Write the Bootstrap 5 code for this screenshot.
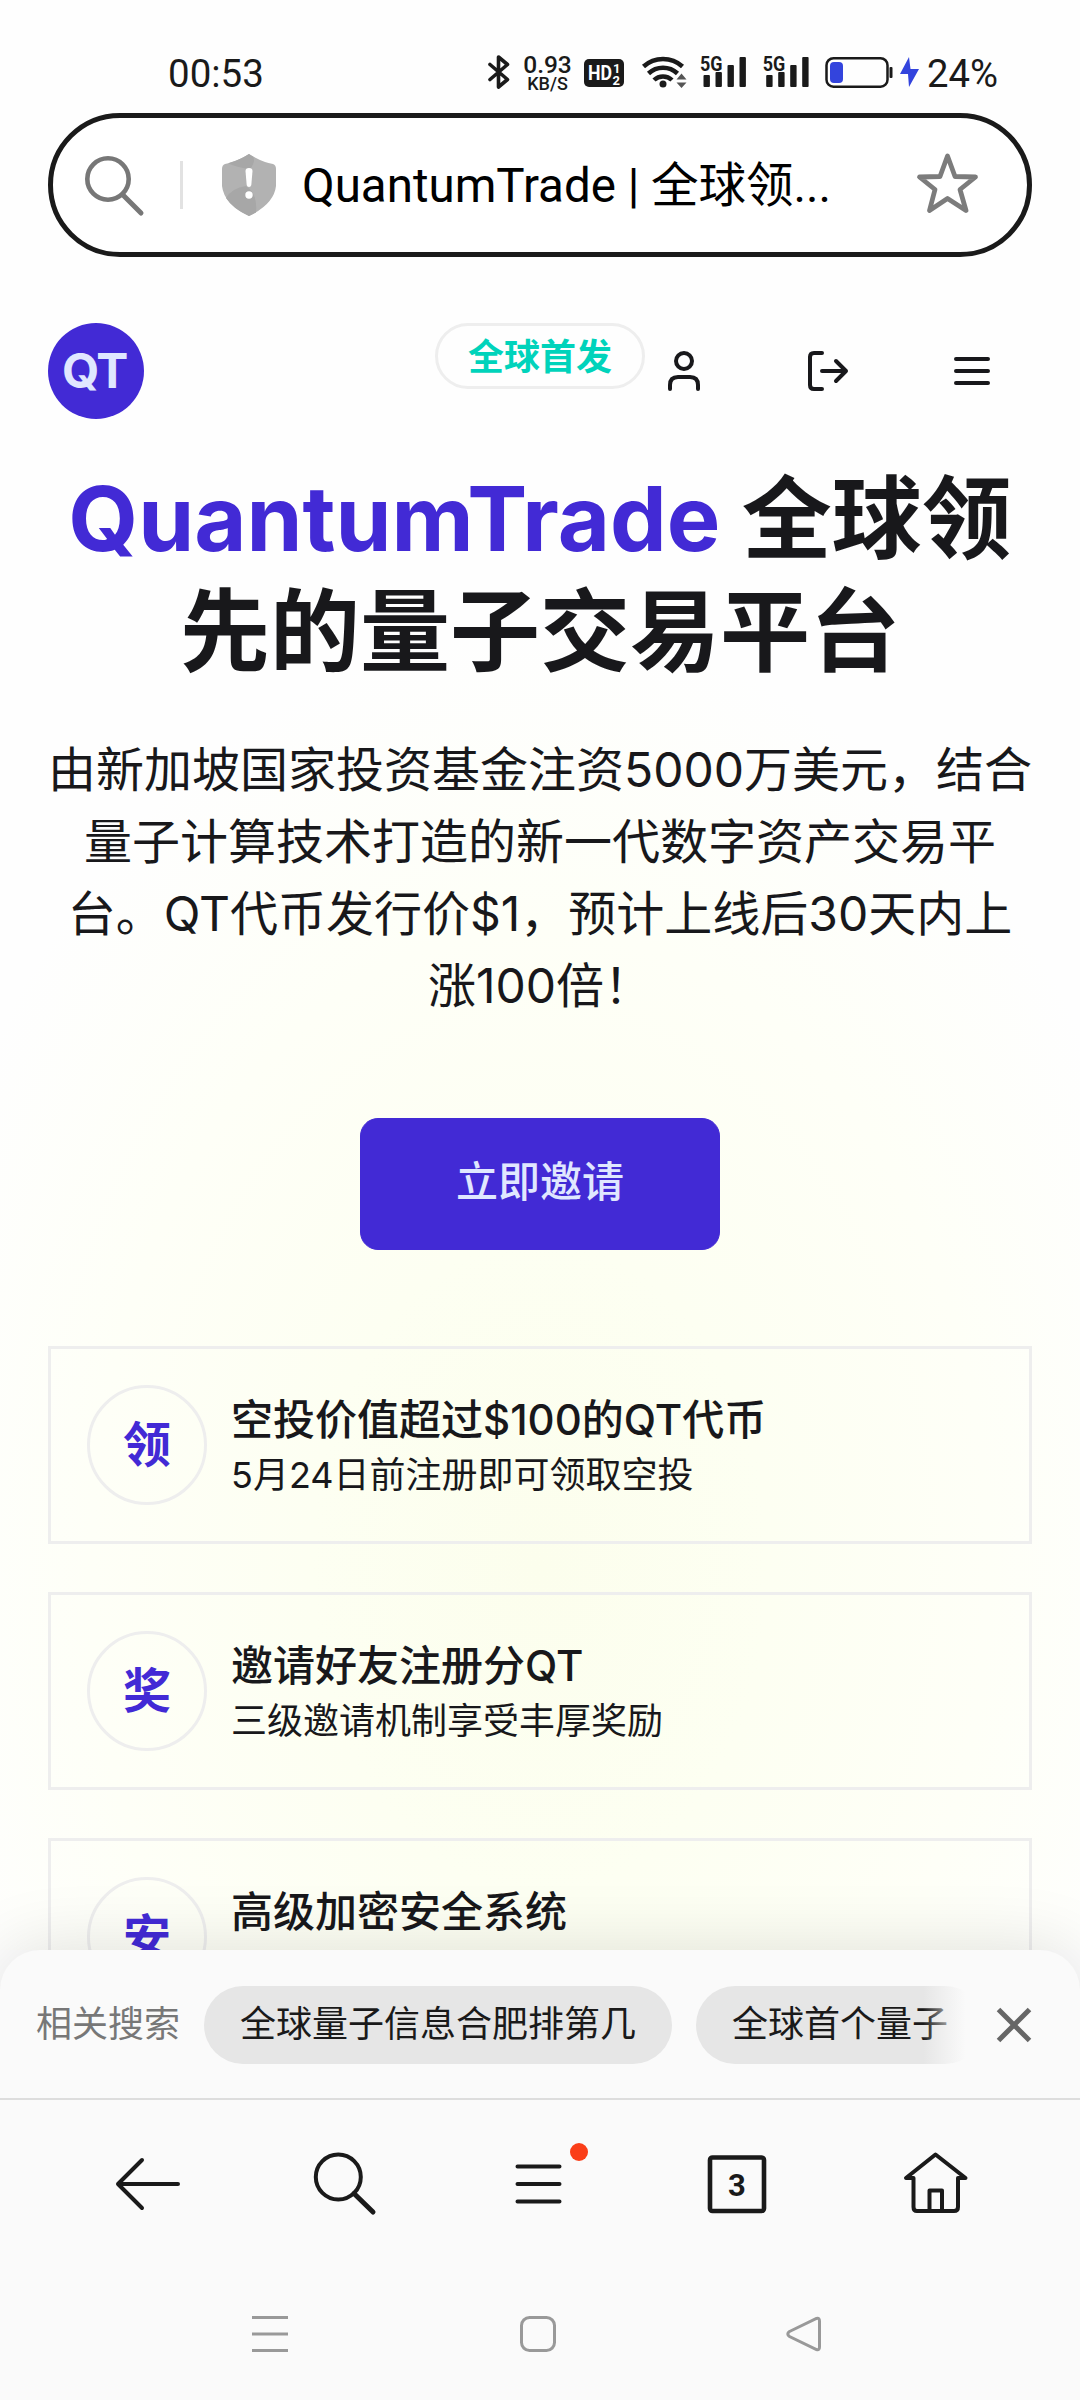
<!DOCTYPE html>
<html lang="zh-CN">
<head>
<meta charset="utf-8">
<meta name="viewport" content="width=device-width, initial-scale=1">
<title>QuantumTrade | 全球领先的量子交易平台</title>
<link href="https://cdn.jsdelivr.net/npm/bootstrap@5.3.0/dist/css/bootstrap.min.css" rel="stylesheet">
<style>
  body { width:1080px; height:2400px; overflow:hidden; color:#18181b; background:#fefefe; font-family:Inter,"Noto Sans CJK SC",sans-serif; }
  svg { display:block; flex:none; overflow:visible; }
  .ui { font-family:Roboto,"Noto Sans CJK SC",sans-serif; color:#1a1a1a; }
  .statusbar { height:113px; padding:30px 83px 0 168px; }
  .clock { font-size:38.5px; line-height:87px; height:83px; }
  .speed { width:49px; margin-left:-1px; margin-right:12px; font-weight:500; text-align:center; }
  .speed-num { font-size:24.500px; line-height:20px; }
  .speed-unit { font-size:18px; line-height:17px; }
  .addressbar { height:144px; margin:0 48px; border:5px solid #1a1a1a; border-radius:72px; padding:0 49px 0 32px; background:#fff; }
  .sep { width:3px; height:48px; background:#e2e2e2; margin:0 39px 0 36px; }
  .page-title { font-size:47.5px; color:#000; margin-left:26px; padding-top:4px; white-space:nowrap; }
  .stage { height:1693px; background:radial-gradient(ellipse 660px 940px at 540px 1310px,#fcfeed 0%,#fdfff2 35%,#fefff7 68%,#fefefe 100%); }
  .site-header { height:162px; padding:66px 72px 0 48px; }
  .logo { width:96px; height:96px; background:#422ad5; color:#e0e7ff; font-size:48px; letter-spacing:-1.5px; padding-right:3px; }
  .launch { width:210px; height:66px; border:3px solid #eee; color:#00d3bb; font-size:36px; line-height:62px; margin-left:291px; }
  .hero { padding-top:44px; }
  .hero-title { font-size:90px; line-height:112.5px; margin:0; white-space:nowrap; }
  .brand-word { color:#422ad5; }
  .hero-text { font-size:48px; line-height:72px; margin:46px 0 0; white-space:nowrap; }
  .cta { width:360px; height:132px; margin-top:96px; border-radius:18px; font-size:42px; line-height:1.4; padding-bottom:10px; font-weight:500; --bs-btn-bg:#422ad5; --bs-btn-border-color:#422ad5; --bs-btn-color:#e0e7ff; }
  .features { padding:96px 48px 0; gap:48px; }
  .feature { height:198px; border:3px solid #eee; padding:0 36px; gap:24px; }
  .emblem { width:120px; height:120px; border:3px solid #eee; color:#422ad5; font-size:48px; }
  .feature-name { font-size:42px; line-height:60px; font-weight:500; }
  .feature-note { font-size:36px; line-height:50px; }
  .dock { height:450px; background:#fafafa; border-radius:40px 40px 0 0; box-shadow:0 0 70px rgba(0,0,0,.13); position:relative; }
  .related { height:150px; padding:2px 49px 0 36px; border-bottom:2px solid #ddd; font-size:36px; }
  .related-label { color:#777; margin-right:24px; }
  .chips { width:768px; gap:24px; }
  .chip { height:78px; line-height:78px; padding:0 36px; border-radius:39px; background:#e6e6e6; white-space:nowrap; flex:none; }
  .fade-edge { right:-1px; top:0; width:50px; height:78px; background:linear-gradient(90deg,rgba(250,250,250,0),#fafafa 85%); }
  .toolbar { height:170px; margin-bottom:50px; }
</style>
</head>
<body>
<div class="ui statusbar d-flex justify-content-between">
  <div class="clock">00:53</div>
  <div class="d-flex align-items-start" style="padding-top:25px">
    <svg width="22" height="34" style="margin-right:14px" fill="none" stroke="#1a1a1a" stroke-width="3.6" stroke-linejoin="round" stroke-linecap="round"><path d="M2 9.500 19.500 24.500 10.500 32V2l9 7.500L2 24.500"/></svg>
    <div class="speed"><div class="speed-num">0.93</div><div class="speed-unit">KB/S</div></div>
    <svg width="362" height="34">
      <rect x="0" y="4" width="40" height="28" rx="5" fill="#1a1a1a"/>
      <g fill="#fff" font-weight="700"><text x="4" y="25" font-size="21" textLength="24" lengthAdjust="spacingAndGlyphs">HD</text><text x="29" y="18" font-size="13">1</text><text x="28.500" y="30" font-size="13">2</text></g>
      <g fill="none" stroke="#1a1a1a" stroke-width="4.500"><path d="M59.500 11.500a29 29 0 0 1 39 0M64.500 18.500a21 21 0 0 1 29 0M70 25a13 13 0 0 1 18 0"/></g>
      <circle cx="79" cy="29" r="3.500" fill="#1a1a1a"/>
      <path d="M92.500 24.500l5-6 5 6zM92.500 27.500h10l-5 5.500z" fill="#555"/>
      <g id="sig" fill="#1a1a1a"><text x="116" y="15.800" font-size="20" font-weight="700" textLength="22.500" lengthAdjust="spacingAndGlyphs">5G</text><rect x="119.500" y="20" width="6.400" height="12" rx="1"/><rect x="131.500" y="17" width="6.400" height="15" rx="1"/><rect x="143.500" y="10" width="6.400" height="22" rx="1"/><rect x="155.500" y="2" width="6.400" height="30" rx="1"/></g>
      <use href="#sig" x="62.700"/>
      <rect x="242.500" y="3.200" width="61" height="28.500" rx="7" fill="none" stroke="#1a1a1a" stroke-width="2.500"/><rect x="305.500" y="12" width="3" height="11" rx="1" fill="#1a1a1a"/><rect x="246" y="7" width="13" height="21" rx="4" fill="#3344dd"/>
      <path d="M325 2l-9 17h8l1 13 10-18h-8.500z" fill="#3344dd"/>
      <text x="343" y="32" font-size="38.500" fill="#1a1a1a" textLength="71" lengthAdjust="spacingAndGlyphs">24%</text>
    </svg>
    <div style="width:51px"></div>
  </div>
</div>
<div class="ui addressbar d-flex align-items-center">
  <svg width="59" height="60" fill="none" stroke="#777" stroke-width="4.600"><circle cx="23" cy="24" r="20.700"/><path d="M37.500 39.500 56 58" stroke-linecap="round" stroke-width="5"/></svg>
  <div class="sep"></div>
  <svg width="54" height="62"><path d="M27 0Q40 8 51 10Q54 11 54 15V32Q52 50 27 62Q2 50 0 32V15Q0 11 3 10Q14 8 27 0z" fill="#b2b2b2"/><path d="M27 0Q29 1.500 31 2.500Q34 8 28 15Q16 14 6 9.200Q18 6 27 0zM4 44Q10 34 24 32Q36 40 34 58.500L27 62Q11 55 4 44z" fill="#a7a7a7"/><path d="M23.500 17q0-3 3.500-3t3.500 3l-1.200 14q-.4 2-2.300 2t-2.300-2z" fill="#fff"/><circle cx="27" cy="41" r="3.700" fill="#fff"/></svg>
  <div class="page-title">QuantumTrade | 全球领...</div>
  <svg class="ms-auto" width="61" height="60" style="margin-top:-4px" fill="none" stroke="#7c7c7c" stroke-width="4.800" stroke-linejoin="round"><path d="M30.500 3 38 23.500 58.500 24 43 36.500 49 57.500 30.500 45.500 12.500 57.500 18 36.500 2.500 24 23 23.500z"/></svg>
</div>

<main class="stage">
  <header class="site-header d-flex align-items-start">
    <div class="logo rounded-circle d-flex align-items-center justify-content-center fw-bold">QT</div>
    <div class="launch rounded-pill text-center fw-bold">全球首发</div>
    <div class="d-flex align-items-center" style="height:96px;margin-left:23px">
      <svg width="32" height="40" fill="none" stroke="#18181b" stroke-width="4" stroke-linecap="round"><circle cx="16" cy="10" r="8"/><path d="M2 38v-4q0-8 8-8h12q8 0 8 8v4"/></svg>
      <svg width="40" height="40" style="margin-left:108px" fill="none" stroke="#18181b" stroke-width="4" stroke-linecap="round" stroke-linejoin="round"><path d="M14 2H6Q2 2 2 6v28q0 4 4 4h8M14 20h24M28 10l10 10-10 10"/></svg>
      <svg width="36" height="28" style="margin-left:106px" stroke="#18181b" stroke-width="4" stroke-linecap="round"><path d="M2 2h32M2 14h32M2 26h32"/></svg>
    </div>
  </header>
  <section class="hero text-center">
    <h1 class="hero-title fw-bold"><span class="brand-word">QuantumTrade</span> 全球领<br>先的量子交易平台</h1>
    <p class="hero-text">由新加坡国家投资基金注资5000万美元，结合<br>量子计算技术打造的新一代数字资产交易平<br>台。QT代币发行价$1，预计上线后30天内上<br>涨100倍！</p>
    <button class="btn btn-primary cta">立即邀请</button>
  </section>
  <section class="features d-flex flex-column">
    <div class="feature d-flex align-items-center"><div class="emblem rounded-circle d-flex align-items-center justify-content-center fw-bold">领</div><div><div class="feature-name">空投价值超过$100的QT代币</div><div class="feature-note">5月24日前注册即可领取空投</div></div></div>
    <div class="feature d-flex align-items-center"><div class="emblem rounded-circle d-flex align-items-center justify-content-center fw-bold">奖</div><div><div class="feature-name">邀请好友注册分QT</div><div class="feature-note">三级邀请机制享受丰厚奖励</div></div></div>
    <div class="feature d-flex align-items-center"><div class="emblem rounded-circle d-flex align-items-center justify-content-center fw-bold">安</div><div><div class="feature-name">高级加密安全系统</div><div class="feature-note">&nbsp;</div></div></div>
  </section>
</main>

<footer class="ui dock">
  <div class="related d-flex align-items-center">
    <div class="related-label text-nowrap">相关搜索</div>
    <div class="chips d-flex overflow-hidden position-relative"><div class="chip">全球量子信息合肥排第几</div><div class="chip">全球首个量子</div><div class="fade-edge position-absolute"></div></div>
    <svg class="ms-auto" width="34" height="34" stroke="#666" stroke-width="5"><path d="M1.500 1.500l31 31M32.500 1.500l-31 31"/></svg>
  </div>
  <div class="toolbar">
    <svg width="1080" height="170" fill="none" stroke="#1a1a1a" stroke-width="4" stroke-linecap="round" stroke-linejoin="round">
      <path d="M178 84H118M142 60 118 84 142 108"/>
      <circle cx="338.300" cy="77" r="22.500"/><path d="M354 93.500 373 112" stroke-width="5"/>
      <path d="M517.500 66.500h42M517.500 84h42M517.500 101.500h42"/><circle cx="579" cy="52" r="9" fill="#fa3e18" stroke="none"/>
      <rect x="710" y="57.500" width="54" height="53.500" rx="2.500" stroke-width="4.600"/>
      <text x="737" y="95.500" font-size="31" font-weight="700" fill="#1a1a1a" stroke="none" text-anchor="middle">3</text>
      <path d="M935.500 54.500 906 78H913.500V107Q913.500 111 917 111H954Q958 111 958 107V78H965.500zM929.500 111V90.500H942V111"/>
    </svg>
  </div>
  <svg width="1080" height="60" fill="none" stroke="#999" stroke-width="3"><path d="M252 -2.500h36M252 14h36M252 30.500h36"/><rect x="521.500" y="-2.500" width="33" height="33" rx="8"/><path d="M789.500 11.500 816.500-1.500Q819.500-2.500 819.500 1V27Q819.500 30.500 816.500 29.500L789.500 16.500Q786 14 789.500 11.500z"/></svg>
</footer>
<script src="https://cdn.jsdelivr.net/npm/bootstrap@5.3.0/dist/js/bootstrap.bundle.min.js"></script>
</body>
</html>
